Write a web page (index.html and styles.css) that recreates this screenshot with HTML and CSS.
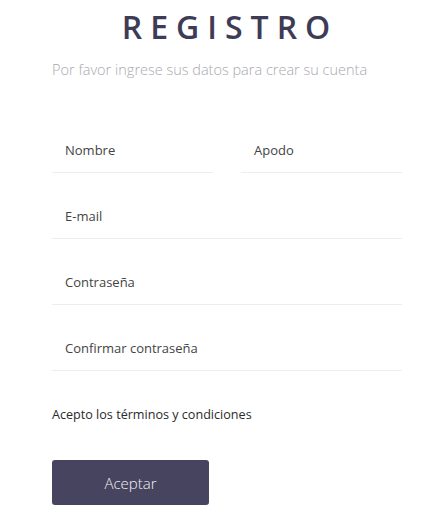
FILE: index.html
```html
<!DOCTYPE html>
<html lang="es">
<head>
    <meta charset="UTF-8">
    <meta name="viewport" content="width=device-width, initial-scale=1.0">
    <title>Registro</title>
    <link rel="stylesheet" href="styles.css">
</head>
<body>
    <div class="container">
        <h1>REGISTRO</h1>
        <p class="subtitle">Por favor ingrese sus datos para crear su cuenta</p>

        <form class="form">
            <div class="row">
                <div class="field"><label>Nombre</label></div>
                <div class="field"><label>Apodo</label></div>
            </div>
            <div class="field"><label>E-mail</label></div>
            <div class="field"><label>Contraseña</label></div>
            <div class="field"><label>Confirmar contraseña</label></div>

            <p class="terms">Acepto los términos y condiciones</p>

            <button type="button" class="btn-submit">Aceptar</button>
        </form>
    </div>
</body>
</html>
```

FILE: styles.css
```css
body {
    font-family: 'Open Sans', 'Noto Sans', sans-serif;
    background: #fff;
    color: #333;
    margin: 0;
    padding: 0;
}

.container {
    width: 350px;
    padding: 8px 0 0 52px;
}

h1 {
    margin: 0;
    font-size: 32px;
    line-height: 1.2;
    font-weight: 600;
    letter-spacing: 8px;
    text-align: center;
    padding-left: 6px;
    color: #3d3b56;
}

.subtitle {
    margin: 14px 0 0;
    font-size: 14.5px;
    line-height: 20px;
    font-weight: 300;
    color: #a9a9b0;
}

.form {
    margin-top: 27px;
}

.row {
    display: grid;
    grid-template-columns: 1fr 1fr;
    gap: 28px;
}

.field {
    padding: 33px 13px 12px;
    border-bottom: 1px solid #ededed;
}

.field label {
    display: block;
    font-size: 13px;
    line-height: 20px;
    color: #444;
}

.terms {
    margin: 34px 0 0;
    font-size: 12.6px;
    line-height: 20px;
    color: #2a2a2a;
}

.btn-submit {
    margin-top: 35px;
    width: 157px;
    height: 45px;
    background-color: #46445f;
    color: #f2f2f5;
    border: none;
    border-radius: 3px;
    font-family: inherit;
    font-size: 15px;
    font-weight: 300;
    cursor: pointer;
}
```
